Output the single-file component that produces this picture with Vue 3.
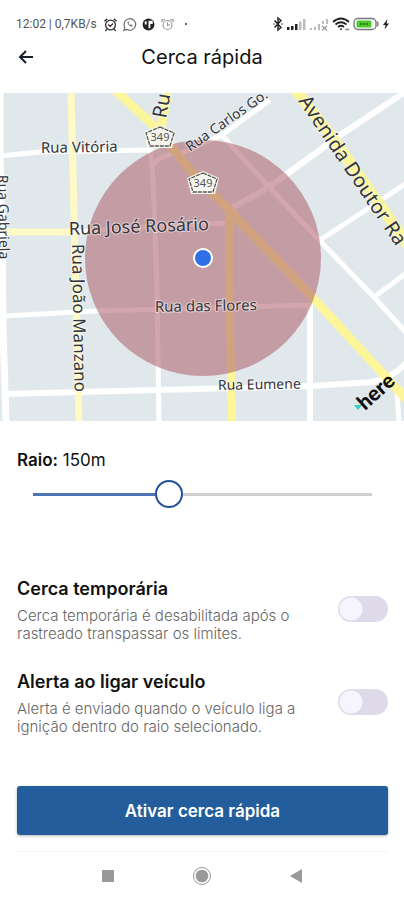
<template>
    <div class="screen">
        <div class="status-bar">
            <div class="status-group">
                <span class="status-text">12:02 | 0,7KB/s</span>
                <svg class="status-icon" viewBox="0 0 16 16" fill="none" stroke="#333" stroke-width="1.4">
                    <circle cx="8" cy="8.5" r="5.2" />
                    <path d="M1.5 4.5 4.5 2M14.5 4.5 11.5 2M4 13 2.5 15M12 13l1.5 2M5.5 8l2.2 2 3-3" />
                </svg>
                <svg class="status-icon" viewBox="0 0 16 16" fill="none" stroke="#666" stroke-width="1.2">
                    <path d="M2 14.2 3 11A6.2 6.2 0 1 1 5.3 13.3Z" />
                    <path d="M6 5c-1 1.5 2.5 6 5 5l.3-1.5-1.7-.8-.8.8c-1-.4-1.5-1-1.9-1.9l.7-.8L7 4.6Z" fill="#777" stroke="none" />
                </svg>
                <svg class="status-icon" viewBox="0 0 16 16">
                    <circle cx="8" cy="8" r="6.3" fill="#222" />
                    <path d="M8 4h4.5v3.5H10V12H8ZM4 4.5h2V8H4Z" fill="#fff" />
                </svg>
                <svg class="status-icon" viewBox="0 0 16 16" fill="none" stroke="#999" stroke-width="1.2">
                    <circle cx="8" cy="8.5" r="4.8" />
                    <path d="M2 5.5V3h3M14 5.5V3h-3M8 5.5V9l2.5-1" />
                </svg>
                <span class="status-dot"></span>
            </div>
            <div class="status-group right">
                <svg class="status-bluetooth" viewBox="0 0 10 16" fill="none" stroke="#222" stroke-width="1.4">
                    <path d="M1.5 4.5 8 11.5 5 14V2l3 2.5-6.5 7" />
                    <path d="M.5 8h1M8.5 8h1" />
                </svg>
                <svg class="status-signal" viewBox="0 0 20 16">
                    <path d="M1 11h2.5v3H1ZM5 10h2.5v4H5ZM9 8h2.5v6H9Z" fill="#222" />
                    <path d="M13 5.5h2.5V14H13ZM17 3h2.5v11H17Z" fill="#bbb" />
                </svg>
                <svg class="status-signal" viewBox="0 0 20 16">
                    <path d="M1 12h2v2H1ZM5 11h2v3H5ZM9 8h2v6H9ZM13 5h2v3h-2ZM17 3h2v5h-2Z" fill="#bbb" />
                    <path d="m13 10 5 4.5m0-4.5-5 4.5" stroke="#999" stroke-width="1.3" />
                </svg>
                <svg class="status-wifi" viewBox="0 0 18 16" fill="none" stroke="#222" stroke-width="1.7">
                    <path d="M1 6q8-7 16 0M3.5 8.5q5.5-4.5 11 0M6 11q3-2.5 6 0" />
                    <path d="m7.5 12.5 1.5 2 1.5-2Z" fill="#222" stroke="none" />
                    <path d="M13.5 13.5h3.5" stroke="#888" />
                </svg>
                <svg class="status-battery" viewBox="0 0 26 16">
                    <rect x="1" y="2.5" width="22" height="11" rx="4" fill="#fff" stroke="#777" stroke-width="1.3" />
                    <path d="M24 5.5q2 2.5 0 5" fill="none" stroke="#777" stroke-width="1.3" />
                    <rect x="3.5" y="4.5" width="15" height="7" rx="1.5" fill="#4fc62b" />
                    <path d="M7 8h8" stroke="#26861b" stroke-width="2" stroke-dasharray="2 1" />
                </svg>
                <svg class="status-bolt" viewBox="0 0 8 16">
                    <path d="M5.5 3 1 9h2.5L2.5 13.5 7 7.5H4.5Z" fill="#222" />
                </svg>
            </div>
        </div>

        <header class="header">
            <button class="back" type="button" aria-label="Voltar">
                <svg viewBox="0 0 20 20" fill="none" stroke="#15202b" stroke-width="2">
                    <path d="M17 10H4M10 4l-6 6 6 6" />
                </svg>
            </button>
            <h1>Cerca rápida</h1>
        </header>

        <svg class="map" viewBox="0 0 404 328" role="img" aria-label="Mapa da cerca">
            <rect width="404" height="328" fill="#e0e8ec" />
            <g fill="none" stroke-linejoin="round">
                <path v-for="road in roads" :key="road.d" :d="road.d" :class="road.kind" :stroke-width="road.width" />
            </g>
            <circle cx="203" cy="165" r="118" fill="#ad5c68" fill-opacity=".55" />

            <g class="labels">
                <text v-for="label in labels" :key="label.text" :transform="`translate(${label.x} ${label.y}) rotate(${label.angle})`"
                    :font-size="label.size">{{ label.text }}</text>
            </g>

            <g v-for="shield in shields" :key="shield.x" :transform="`translate(${shield.x} ${shield.y})`">
                <path d="M0-12 16-5 12 11h-24L-16-5Z" fill="#f7f6ee" />
                <path d="M0-10 14-4 10 9h-20L-14-4Z" fill="#f7f6ee" stroke="#555" stroke-width="1.3" stroke-dasharray="4 1" />
                <text class="shield-text" y="4" text-anchor="middle">349</text>
            </g>

            <circle cx="203" cy="165" r="9" fill="#2f70e6" stroke="#fff" stroke-width="2" />
            <path d="m354 312 8 0-4 5Z" fill="#36cfc5" />
            <text class="here" transform="translate(365 318) rotate(-42)">here</text>
        </svg>

        <main class="content">
            <label class="radius-label" for="radius"><strong>Raio:</strong> {{ radius }}m</label>
            <input id="radius" v-model="radius" class="slider" type="range" min="50" max="300" step="10"
                :style="{ '--fill': fill + '%' }" />

            <div class="options">
                <div v-for="option in options" :key="option.id" class="option">
                    <label class="option-text" :for="option.id">
                        <span class="option-title">{{ option.title }}</span>
                        <span class="option-description">{{ option.description }}</span>
                    </label>
                    <input :id="option.id" v-model="option.enabled" class="switch" type="checkbox" role="switch" />
                </div>
            </div>

            <button class="submit" type="button">Ativar cerca rápida</button>
        </main>

        <nav class="system-nav">
            <button type="button" aria-label="Recentes">
                <svg viewBox="0 0 20 20"><rect x="4" y="4" width="12" height="12" fill="#999" /></svg>
            </button>
            <button type="button" aria-label="Início">
                <svg viewBox="0 0 20 20">
                    <circle cx="10" cy="10" r="8.5" fill="none" stroke="#999" />
                    <circle cx="10" cy="10" r="6.3" fill="#999" />
                </svg>
            </button>
            <button type="button" aria-label="Voltar ao anterior">
                <svg viewBox="0 0 20 20"><path d="M4 10 16 3v14Z" fill="#999" /></svg>
            </button>
        </nav>
    </div>
</template>

<script setup>
import { computed, reactive, ref } from 'vue';

const radius = ref(150);
const fill = computed(() => ((radius.value - 50) / 250) * 100);

const options = reactive([
    {
        id: 'temporary',
        title: 'Cerca temporária',
        description: 'Cerca temporária é desabilitada após o rastreado transpassar os limites.',
        enabled: false,
    },
    {
        id: 'ignition',
        title: 'Alerta ao ligar veículo',
        description: 'Alerta é enviado quando o veículo liga a ignição dentro do raio selecionado.',
        enabled: false,
    },
]);

const roads = [
    { kind: 'street', width: 7, d: 'M0 0V60L2 139 3 237 6 328' },
    { kind: 'street', width: 5, d: 'M0 63 40 59 148 57 162 46' },
    { kind: 'street', width: 5, d: 'M149 50 152 72 154 110 157 195 159 328' },
    { kind: 'street', width: 5, d: 'M152 74Q160 60 182 60L222 42 270 7' },
    { kind: 'street', width: 5, d: 'M220 40 269 94 320 148 374 204 410 244' },
    { kind: 'street', width: 6, d: 'M230 116 269 94 342 41 408-3' },
    { kind: 'street', width: 5, d: 'M320 147 369 115 408 89' },
    { kind: 'street', width: 5, d: 'M374 204 408 179' },
    { kind: 'street', width: 5, d: 'M4 223 97 218 312 212' },
    { kind: 'street', width: 6, d: 'M4 301 157 297 312 293 372 289Q392 286 408 268' },
    { kind: 'street', width: 6, d: 'M310 210V328' },
    { kind: 'street', width: 5, d: 'M397 300 399 328' },
    { kind: 'avenue-light', width: 7, d: 'M3 139H74' },
    { kind: 'street', width: 5, d: 'M74 139 160 133 229 130' },
    { kind: 'avenue-light', width: 7, d: 'M71-2 74 120 79 330' },
    { kind: 'avenue', width: 9, d: 'M168-2 160 40' },
    { kind: 'avenue', width: 8, d: 'M229 119V180L232 330' },
    { kind: 'avenue', width: 9, d: 'M114-4 155 34 192 79 232 120 315 207 408 308' },
    { kind: 'avenue', width: 11, d: 'M295-4 335 48 408 152' },
];

const labels = [
    { text: 'Rua Vitória', x: 41, y: 60, angle: -1, size: 15 },
    { text: 'Ru', x: 166, y: 26, angle: -80, size: 20 },
    { text: 'Rua Carlos Go.', x: 190, y: 59, angle: -35, size: 14 },
    { text: 'Avenida Doutor Ra', x: 298, y: 8, angle: 56, size: 20 },
    { text: 'Rua Gabriela', x: -2, y: 82, angle: 89, size: 14 },
    { text: 'Rua José Rosário', x: 69, y: 142, angle: -2, size: 18 },
    { text: 'Rua João Manzano', x: 72, y: 151, angle: 89, size: 17 },
    { text: 'Rua das Flores', x: 155, y: 219, angle: -1, size: 15 },
    { text: 'Rua Eumene', x: 218, y: 297, angle: -1, size: 14 },
];

const shields = [
    { x: 160, y: 44 },
    { x: 203, y: 90 },
];
</script>

<style>
body {
    margin: 0;
    background: #fff;
}
</style>

<style scoped>
.screen {
    min-height: 100vh;
    display: flex;
    flex-direction: column;
    background: #fff;
    color: #111;
    font-family: Inter, sans-serif;
}

button {
    padding: 0;
    border: 0;
    background: none;
    font: inherit;
    cursor: pointer;
}

svg {
    display: block;
}

.status-bar {
    display: flex;
    justify-content: space-between;
    padding: 16px 14px 0 16px;
    color: #555;
    font-family: Roboto, sans-serif;
    font-size: 12px;
    line-height: 16px;
}

.status-group {
    display: flex;
    align-items: center;
    gap: 4px;
}

.status-group.right {
    gap: 3px;
}

.status-text {
    margin-right: 2px;
    white-space: nowrap;
}

.status-icon {
    width: 15px;
    height: 15px;
}

.status-dot {
    width: 2px;
    height: 2px;
    margin-left: 6px;
    border-radius: 50%;
    background: #333;
}

.status-bluetooth {
    width: 10px;
    height: 16px;
}

.status-signal {
    width: 20px;
    height: 16px;
}

.status-wifi {
    width: 18px;
    height: 16px;
}

.status-battery {
    width: 26px;
    height: 16px;
}

.status-bolt {
    width: 8px;
    height: 16px;
}

.header {
    display: grid;
    grid-template-columns: 20px 1fr 20px;
    align-items: center;
    padding: 11px 16px 22px;
}

.back svg {
    width: 20px;
    height: 20px;
}

h1 {
    margin: 0;
    font-size: 20px;
    font-weight: 400;
    line-height: 28px;
    text-align: center;
}

.map {
    width: 100%;
    height: auto;
}

.street {
    stroke: #fff;
}

.avenue {
    stroke: #fdf59a;
}

.avenue-light {
    stroke: #fff9c6;
}

.labels text {
    fill: #33363d;
    stroke: #fff;
    stroke-opacity: .5;
    stroke-width: 2px;
    paint-order: stroke;
    font-family: "Noto Sans", sans-serif;
}

.shield-text {
    fill: #555;
    font-family: "Noto Sans", sans-serif;
    font-size: 11px;
}

.here {
    fill: #111;
    font-family: Lato, sans-serif;
    font-size: 21px;
    font-weight: 900;
}

.content {
    display: flex;
    flex-direction: column;
    padding: 28px 16px 16px 17px;
}

.radius-label {
    font-size: 17px;
    line-height: 22px;
}

.radius-label strong {
    font-weight: 600;
}

.slider {
    height: 28px;
    margin: 9px 2px 0;
    appearance: none;
    background:
        linear-gradient(to right, #4d74b3 var(--fill), #d0d0d0 var(--fill)) center / calc(100% - 28px) 3px no-repeat;
    cursor: pointer;
}

.slider::-webkit-slider-thumb {
    width: 28px;
    height: 28px;
    appearance: none;
    box-sizing: border-box;
    border: 2px solid #24509a;
    border-radius: 50%;
    background: #fff;
}

.options {
    display: flex;
    flex-direction: column;
    gap: 28px;
    margin-top: 70px;
}

.option {
    display: flex;
    align-items: flex-start;
    justify-content: space-between;
    gap: 24px;
}

.option-text {
    max-width: 290px;
}

.option-title {
    display: block;
    margin-bottom: 7px;
    font-size: 18px;
    font-weight: 600;
    line-height: 22px;
}

.option-description {
    display: block;
    color: #666;
    font-size: 15px;
    font-weight: 300;
    line-height: 18px;
}

.switch {
    width: 50px;
    height: 26px;
    flex: none;
    margin: 18px 0 0;
    appearance: none;
    border-radius: 13px;
    background: radial-gradient(circle at 13px 13px, #f6f4fc 11px, transparent 12px) #dedaea;
    cursor: pointer;
}

.switch:checked {
    background: radial-gradient(circle at 37px 13px, #fff 11px, transparent 12px) #245d9c;
}

.submit {
    height: 49px;
    margin-top: 50px;
    border-radius: 3px;
    background: #245d9c;
    box-shadow: 0 1px 3px rgba(0, 0, 0, .3);
    color: #fff;
    font-size: 17px;
    font-weight: 600;
}

.system-nav {
    display: flex;
    justify-content: center;
    gap: 74px;
    margin: 0 16px;
    padding: 14px 0;
    border-top: 1px solid #f4f4f4;
}

.system-nav svg {
    width: 20px;
    height: 20px;
}
</style>
